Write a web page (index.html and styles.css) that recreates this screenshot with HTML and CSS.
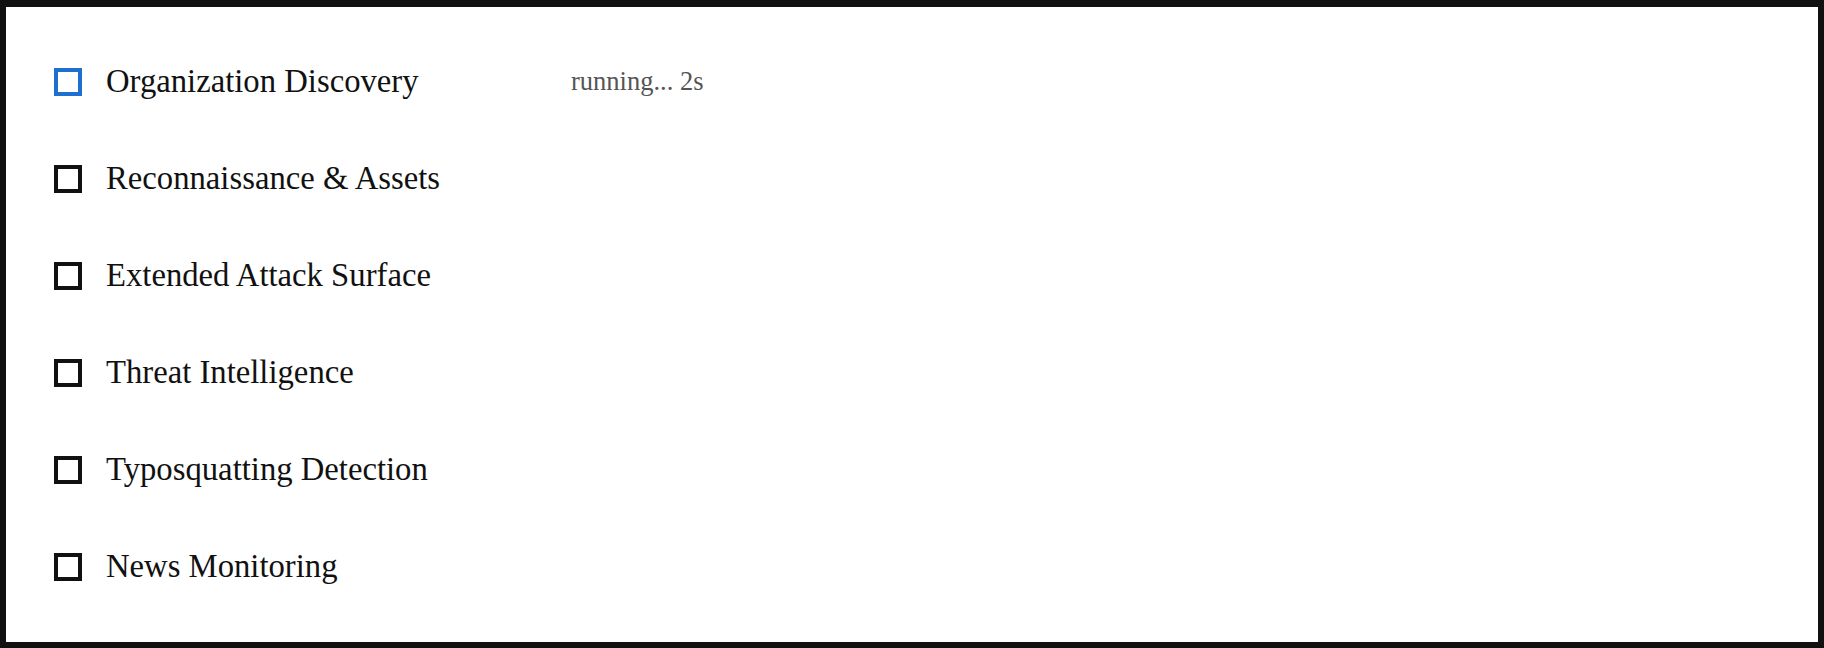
FILE: index.html
```html
<!DOCTYPE html>
<html>
<head>
<meta charset="utf-8">
<link rel="stylesheet" href="styles.css">
</head>
<body>
<div class="frame">
  <ul class="tasks">
    <li class="task active">
      <span class="box"></span>
      <span class="label">Organization Discovery</span>
      <span class="status">running... 2s</span>
    </li>
    <li class="task">
      <span class="box"></span>
      <span class="label">Reconnaissance &amp; Assets</span>
    </li>
    <li class="task">
      <span class="box"></span>
      <span class="label">Extended Attack Surface</span>
    </li>
    <li class="task">
      <span class="box"></span>
      <span class="label">Threat Intelligence</span>
    </li>
    <li class="task">
      <span class="box"></span>
      <span class="label">Typosquatting Detection</span>
    </li>
    <li class="task">
      <span class="box"></span>
      <span class="label">News Monitoring</span>
    </li>
  </ul>
</div>
</body>
</html>
```
FILE: styles.css
```css
html, body {
  margin: 0;
  padding: 0;
  background: #ffffff;
}
body {
  font-family: "Liberation Serif", "Times New Roman", serif;
  color: #111111;
}
.frame {
  box-sizing: border-box;
  width: 1824px;
  height: 648px;
  border: 6px solid #111111;
  border-top-width: 7px;
  padding: 26px 48px 27px 48px;
  background: #ffffff;
}
.tasks {
  list-style: none;
  margin: 0;
  padding: 0;
  display: flex;
  flex-direction: column;
}
.task {
  height: 97px;
  display: flex;
  align-items: center;
}
.box {
  box-sizing: border-box;
  width: 28px;
  height: 28px;
  border: 4.5px solid #111111;
  flex: none;
}
.task.active .box {
  border-color: #1f6fd1;
}
.label {
  margin-left: 24px;
  width: 439px;
  font-size: 32.7px;
  color: #111111;
  flex: none;
}
.status {
  margin-left: 26px;
  font-size: 26.5px;
  color: #555555;
}
```
